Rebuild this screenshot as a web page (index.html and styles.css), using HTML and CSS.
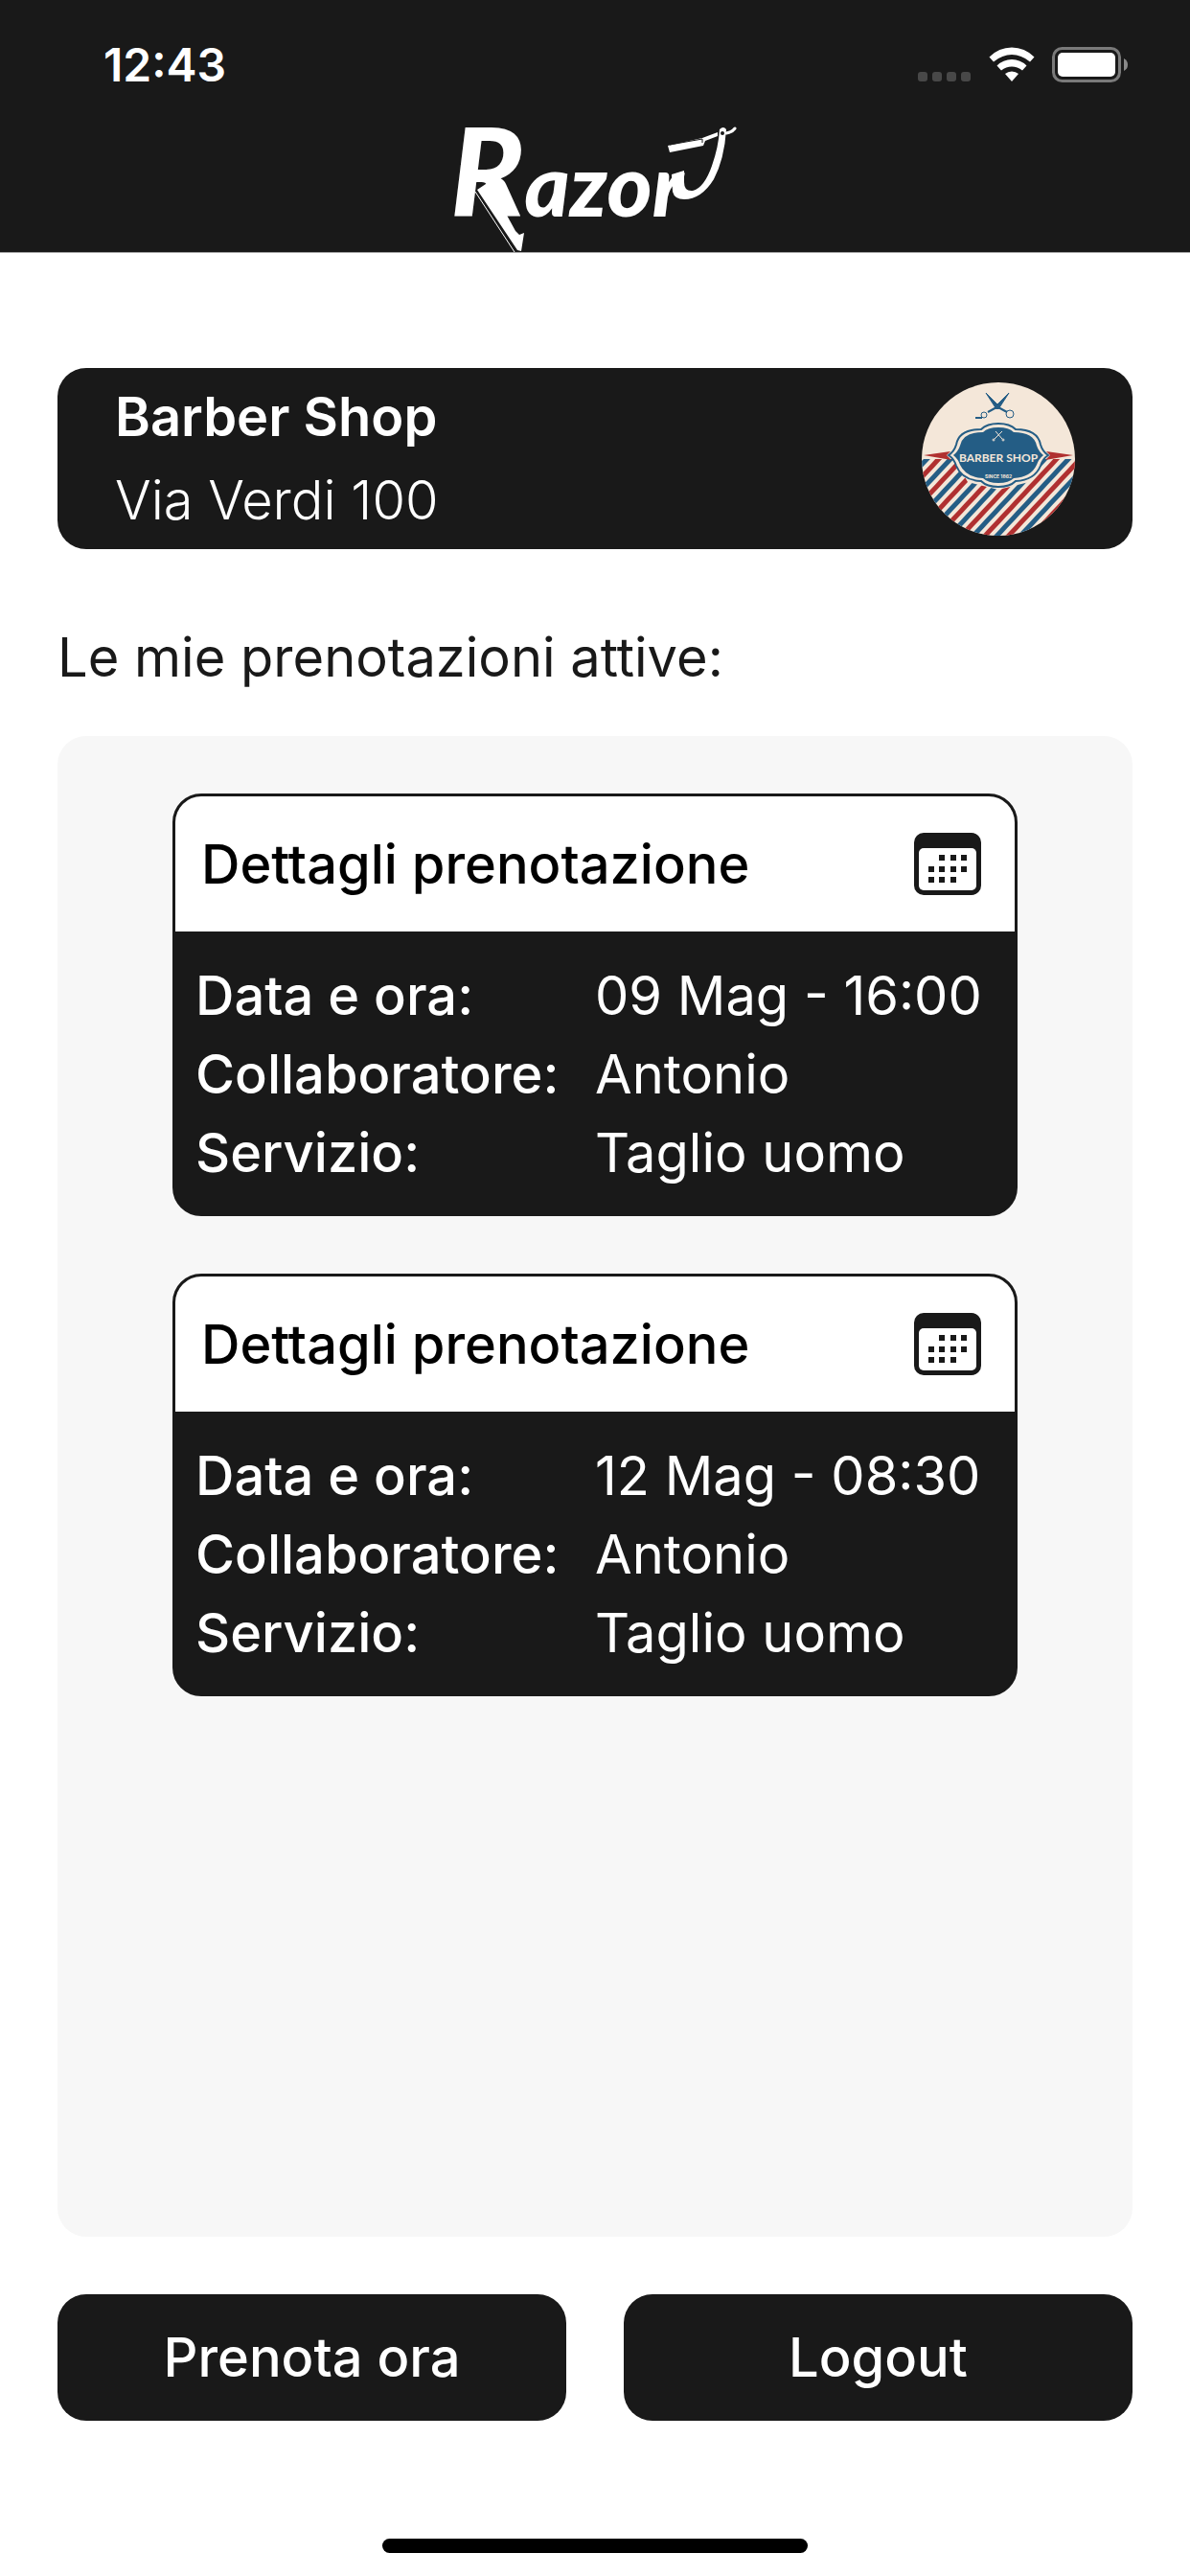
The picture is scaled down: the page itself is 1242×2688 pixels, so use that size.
FILE: index.html
```
<!DOCTYPE html>
<html lang="it">
<head>
    <meta charset="UTF-8">
    <meta name="viewport" content="width=device-width, initial-scale=1.0">
    <title>Razor - Le mie prenotazioni</title>
    <link rel="stylesheet" href="styles.css">
</head>
<body>
    <div class="app">
        <header class="header">
            <div class="status-bar">
                <span class="status-time">12:43</span>
                <div class="status-icons">
                    <svg class="icon-signal" width="56" height="38" viewBox="0 0 56 38" fill="#484848">
                        <rect x="0" y="26" width="10" height="10" rx="3"/>
                        <rect x="15" y="26" width="10" height="10" rx="3"/>
                        <rect x="30" y="26" width="10" height="10" rx="3"/>
                        <rect x="45" y="26" width="10" height="10" rx="3"/>
                    </svg>
                    <svg class="icon-wifi" width="48" height="38" viewBox="0 0 48 38" fill="#fff">
                        <path d="M0.500 10.500Q10.500 0.500 24 0.500T47.500 10.500L43 15.500Q34 8 24 8T5 15.500Z"/>
                        <path d="M8.500 19.500Q15 13 24 13T39.500 19.500L35 24.500Q30 20.500 24 20.500T13 24.500Z"/>
                        <path d="M17 28Q20 25.500 24 25.500T31 28L24 36Z"/>
                    </svg>
                    <svg class="icon-battery" width="80" height="38" viewBox="0 0 80 38">
                        <rect x="1.500" y="1.500" width="69" height="34" rx="9" fill="none" stroke="#7a7a7a" stroke-width="3"/>
                        <rect x="6" y="6" width="60" height="25" rx="5" fill="#fff"/>
                        <path d="M75 12Q79 14 79 18.500T75 25Z" fill="#8a8a8a"/>
                    </svg>
                </div>
            </div>
            <div class="nav-bar">
                <svg class="logo" width="310" height="134" viewBox="0 0 310 134" role="img" aria-label="Razor">
                    <text class="logo-text" x="4" y="96"><tspan class="logo-initial">R</tspan>azor</text>
                    <!-- tail of the R -->
                    <path d="M44 60L72 111L76 115L81 113L78 132L74 131L32 68Z" fill="#fff"/>
                    <path d="M30 70L71 133" fill="none" stroke="#fff" stroke-width="1"/>
                    <!-- handle -->
                    <path d="M285 5Q289 1 292 5Q290 36 279 57Q266 78 248 78Q238 78 236 70L235 52L248 48V60Q248 70 257 69Q269 66 277 43Q284 23 285 5Z" fill="#fff"/>
                    <circle cx="288" cy="9" r="2" fill="#191919"/>
                    <path d="M292 9Q298 8 301 4" fill="none" stroke="#fff" stroke-width="3" stroke-linecap="round"/>
                    <!-- blade -->
                    <path d="M231 22L267 14L283 8V12L270 17L268 22L233 29Z" fill="#fff"/>
                    <path d="M233 21L267 15V19" fill="none" stroke="#191919" stroke-width="1"/>
                </svg>
            </div>
        </header>

        <main class="content">
            <section class="shop-card">
                <div class="shop-info">
                    <h1>Barber Shop</h1>
                    <p>Via Verdi 100</p>
                </div>
                <svg class="shop-logo" width="160" height="160" viewBox="0 0 160 160" role="img" aria-label="Barber Shop">
                    <defs>
                        <clipPath id="badgeClip"><circle cx="80" cy="80" r="80"/></clipPath>
                        <pattern id="stripes" width="18" height="18" patternUnits="userSpaceOnUse" patternTransform="rotate(43)">
                            <rect x="2" width="5" height="18" fill="#245d85"/>
                            <rect x="11" width="5" height="18" fill="#b03030"/>
                        </pattern>
                    </defs>
                    <g clip-path="url(#badgeClip)">
                        <rect width="160" height="160" fill="#f4e7d9"/>
                        <path d="M0 80H34L48 104L80 112L112 104L126 80H160V160H0Z" fill="url(#stripes)"/>
                        <path d="M2 76L30 72L26 76L31 81Z" fill="#b03030"/>
                        <path d="M158 76L130 72L134 76L129 81Z" fill="#b03030"/>
                    </g>
                    <path class="plaque-edge" d="M80 43Q92 43 98 49Q121 49 124 65Q126 72 132 76Q126 80 124 87Q118 102 98 103Q92 109 80 109T62 103Q42 102 36 87Q34 80 28 76Q34 72 36 65Q39 49 62 49Q68 43 80 43Z"/>
                    <path d="M80 47Q91 47 96 52Q117 52 120 66Q122 72 127 76Q122 80 120 86Q114 99 96 100Q91 105 80 105T64 100Q46 99 40 86Q38 80 33 76Q38 72 40 66Q43 52 64 52Q69 47 80 47Z" fill="#245d85"/>
                    <!-- big scissors -->
                    <g fill="none" stroke="#245d85" stroke-width="1">
                        <path d="M67 11L81 25L78 28Z" fill="#245d85"/>
                        <path d="M91 11L77 25L80 28Z" fill="#245d85"/>
                        <path d="M80 25L69 31M78 25L89 31M56 37H63" stroke-width="2"/>
                        <circle cx="65" cy="34" r="3"/>
                        <circle cx="92" cy="33" r="4"/>
                    </g>
                    <!-- small scissors -->
                    <g fill="none" stroke="#f4e7d9" stroke-width="1">
                        <path d="M77 51L84 59M84 51L76 59"/>
                        <circle cx="75" cy="60" r="1"/>
                        <circle cx="85" cy="60" r="1"/>
                    </g>
                    <text class="badge-title" x="80" y="83">BARBER SHOP</text>
                    <text class="badge-since" x="80" y="100">SINCE 1862</text>
                </svg>
            </section>

            <h2 class="section-title">Le mie prenotazioni attive:</h2>

            <section class="bookings">
                <article class="booking">
                    <div class="booking-header">
                        <h3>Dettagli prenotazione</h3>
                        <svg class="icon-calendar" width="70" height="65" viewBox="0 0 70 65">
                            <rect width="70" height="65" rx="10" fill="#191919"/>
                            <rect x="5" y="16" width="60" height="44" rx="5" fill="#fff"/>
                            <path d="M26 26h6M38 26h6M49 26h6M15 38h6M26 38h6M38 38h6M49 38h6M15 49h6M26 49h6M38 49h6" stroke="#191919" stroke-width="6"/>
                        </svg>
                    </div>
                    <dl class="booking-details">
                        <dt>Data e ora:</dt>
                        <dd>09 Mag - 16:00</dd>
                        <dt>Collaboratore:</dt>
                        <dd>Antonio</dd>
                        <dt>Servizio:</dt>
                        <dd>Taglio uomo</dd>
                    </dl>
                </article>

                <article class="booking">
                    <div class="booking-header">
                        <h3>Dettagli prenotazione</h3>
                        <svg class="icon-calendar" width="70" height="65" viewBox="0 0 70 65">
                            <rect width="70" height="65" rx="10" fill="#191919"/>
                            <rect x="5" y="16" width="60" height="44" rx="5" fill="#fff"/>
                            <path d="M26 26h6M38 26h6M49 26h6M15 38h6M26 38h6M38 38h6M49 38h6M15 49h6M26 49h6M38 49h6" stroke="#191919" stroke-width="6"/>
                        </svg>
                    </div>
                    <dl class="booking-details">
                        <dt>Data e ora:</dt>
                        <dd>12 Mag - 08:30</dd>
                        <dt>Collaboratore:</dt>
                        <dd>Antonio</dd>
                        <dt>Servizio:</dt>
                        <dd>Taglio uomo</dd>
                    </dl>
                </article>
            </section>

            <div class="actions">
                <button type="button" class="btn">Prenota ora</button>
                <button type="button" class="btn">Logout</button>
            </div>
        </main>

        <footer class="home-area">
            <div class="home-indicator"></div>
        </footer>
    </div>
</body>
</html>
```
FILE: styles.css
```
* {
    box-sizing: border-box;
    margin: 0;
    padding: 0;
}

body {
    font-family: 'Inter', 'Liberation Sans', sans-serif;
    font-size: 56px;
    line-height: 82px;
    background-color: #fff;
    color: #191919;
}

svg {
    display: block;
    flex-shrink: 0;
}

.app {
    min-height: 100vh;
    display: flex;
    flex-direction: column;
}

/* Header */
.header {
    background-color: #191919;
    border-bottom: 1px solid #a8a8a8;
}

.status-bar {
    display: flex;
    justify-content: space-between;
    align-items: center;
    height: 130px;
    padding: 6px 64px 0 108px;
}

.status-time {
    color: #fff;
    font-size: 48px;
    font-weight: 600;
}

.status-icons {
    display: flex;
    align-items: center;
    gap: 18px;
}

.nav-bar {
    display: flex;
    justify-content: center;
}

.logo {
    height: 134px;
    margin-bottom: -1px;
    overflow: visible;
}

.logo-text {
    font-family: 'Lato', sans-serif;
    font-size: 90px;
    font-style: italic;
    font-weight: 900;
    fill: #fff;
}

.logo-initial {
    font-size: 128px;
}

/* Content */
.content {
    flex: 1;
    display: flex;
    flex-direction: column;
    padding: 120px 60px 0;
}

.shop-card {
    display: flex;
    justify-content: space-between;
    align-items: center;
    padding: 8px 60px 7px;
    border-radius: 30px;
    background-color: #191919;
    color: #fff;
}

.shop-info {
    line-height: 87px;
}

.shop-info h1 {
    font-size: 56px;
    font-weight: 600;
}

.shop-info p {
    font-weight: 300;
}

.plaque-edge {
    fill: #f4e7d9;
    stroke: #245d85;
    stroke-width: 2;
}

.badge-title {
    font-family: 'Lato', sans-serif;
    font-size: 12px;
    font-weight: 700;
    text-anchor: middle;
    fill: #f4e7d9;
}

.badge-since {
    font-size: 5px;
    font-weight: 700;
    text-anchor: middle;
    fill: #f4e7d9;
}

.section-title {
    margin: 72px 0 41px;
    font-size: 56px;
    font-weight: 400;
}

.bookings {
    flex: 1;
    display: flex;
    flex-direction: column;
    gap: 60px;
    padding: 60px 120px;
    border-radius: 30px;
    background-color: #f7f7f7;
}

.booking {
    border: 3px solid #191919;
    border-radius: 30px;
    background-color: #191919;
    overflow: hidden;
}

.booking-header {
    display: flex;
    justify-content: space-between;
    align-items: center;
    height: 141px;
    padding: 0 35px 0 27px;
    background-color: #fff;
}

.booking-header h3 {
    color: #000;
    font-size: 56px;
    font-weight: 500;
}

.booking-details {
    display: grid;
    grid-template-columns: 417px 1fr;
    padding: 26px 0 22px 21px;
    color: #fff;
}

.booking-details dt {
    font-weight: 500;
}

/* Buttons */
.actions {
    display: flex;
    gap: 60px;
    margin-top: 60px;
}

.btn {
    flex: 1;
    height: 132px;
    border: none;
    border-radius: 30px;
    background-color: #191919;
    color: #fff;
    font-family: inherit;
    font-size: 56px;
    font-weight: 500;
    cursor: pointer;
}

.home-area {
    display: flex;
    justify-content: center;
    align-items: flex-end;
    height: 162px;
    padding-bottom: 24px;
}

.home-indicator {
    width: 444px;
    height: 15px;
    border-radius: 8px;
    background-color: #000;
}
```
